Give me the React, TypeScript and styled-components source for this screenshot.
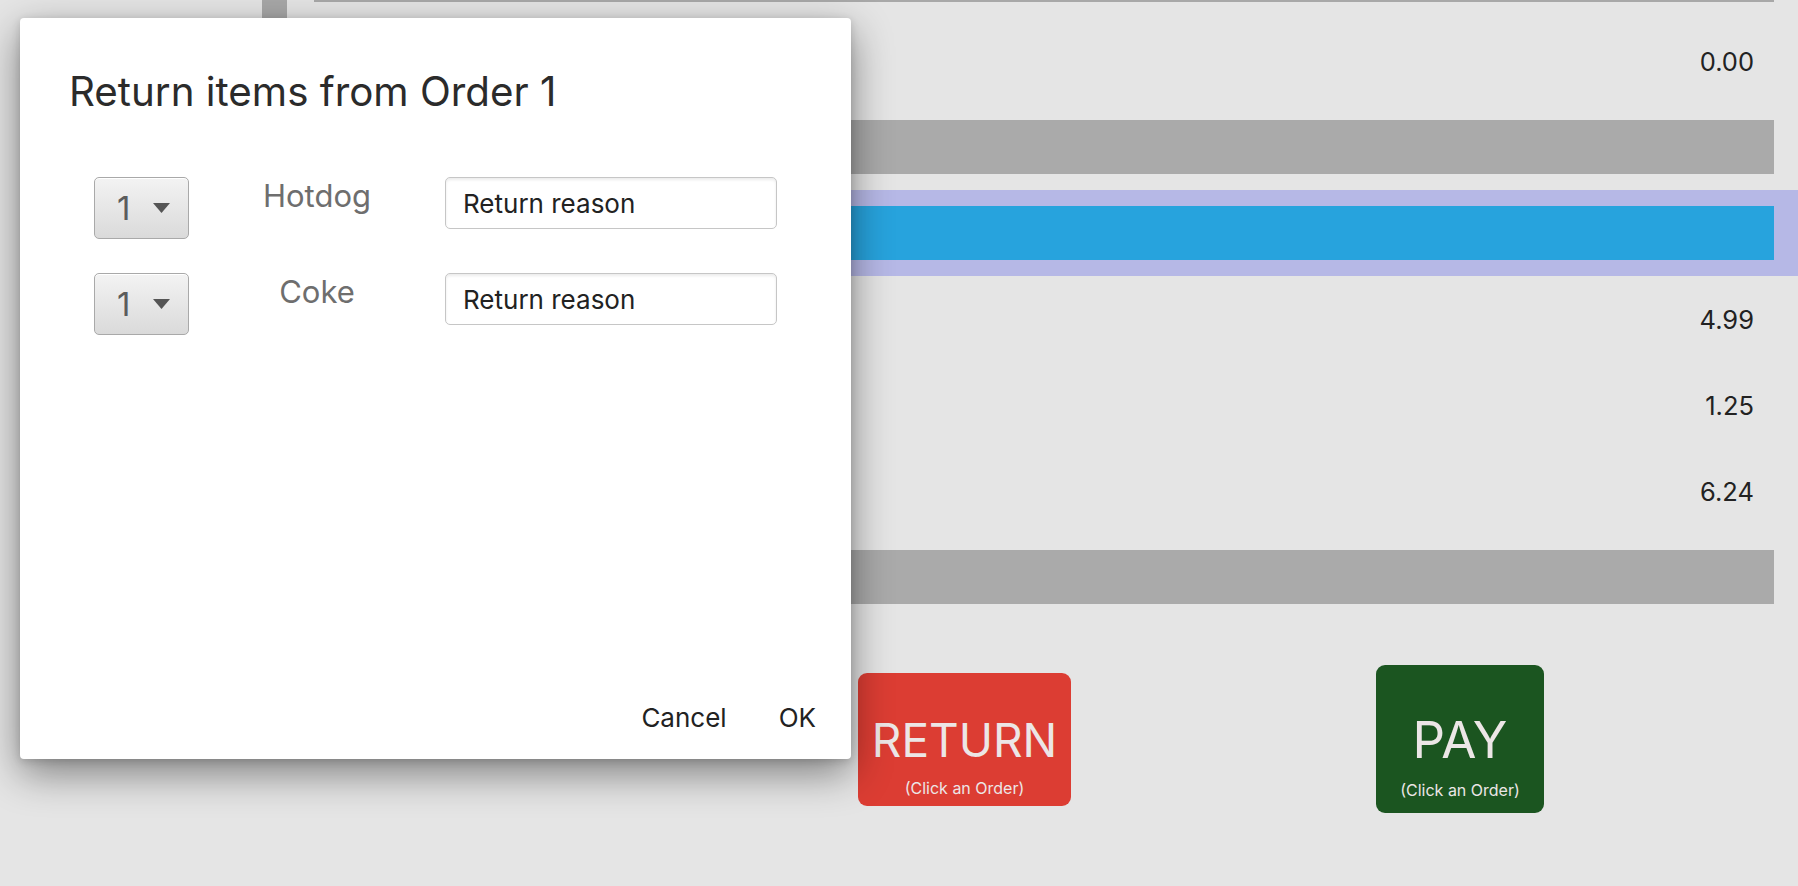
import React from "react";
import styled, { createGlobalStyle } from "styled-components";

const GlobalStyle = createGlobalStyle`
  html, body {
    margin: 0;
    padding: 0;
    background: #e5e5e5;
  }
  body {
    font-family: Inter, "Liberation Sans", sans-serif;
    overflow: hidden;
  }
`;

const Screen = styled.div`
  position: relative;
  display: flex;
  width: 1798px;
  height: 886px;
  background: #e5e5e5;
  overflow: hidden;
`;

const Sidebar = styled.div`
  width: 262px;
  flex-shrink: 0;
`;

const ScrollThumb = styled.div`
  width: 25px;
  height: 120px;
  flex-shrink: 0;
  background: #a8a8a8;
`;

const OrderPanel = styled.div`
  display: flex;
  flex-direction: column;
  width: 1460px;
  margin-left: 27px;
  border-top: 2px solid #a8a8a8;
`;

interface IValueRow {
  $height: number;
}

const ValueRow = styled.div<IValueRow>`
  display: flex;
  align-items: center;
  justify-content: flex-end;
  height: ${({ $height }) => $height}px;
  padding-right: 20px;
  font-size: 25.5px;
  color: #222;
`;

const GrayBar = styled.div`
  height: 54px;
  background: #aaaaaa;
`;

const Spacer = styled.div`
  height: 16px;
`;

const SelectedRow = styled.div`
  margin-right: -24px;
  padding: 16px 24px 16px 0;
  background: #b6b8e6;
`;

const SelectedBar = styled.div`
  height: 54px;
  background: #27a3dd;
`;

const ActionBar = styled.div`
  display: flex;
  align-items: center;
  height: 270px;
  padding-left: 544px;
  gap: 305px;
`;

interface IActionButton {
  $bg: string;
  $w: number;
  $h: number;
  $titleSize: number;
}

const ActionButton = styled.button<IActionButton>`
  display: flex;
  flex-direction: column;
  align-items: center;
  justify-content: center;
  width: ${({ $w }) => $w}px;
  height: ${({ $h }) => $h}px;
  padding: 34px 0 0;
  border: none;
  border-radius: 9px;
  background: ${({ $bg }) => $bg};
  color: #ece6e6;
  font-family: Inter, "Liberation Sans", sans-serif;

  strong {
    font-weight: 400;
    font-size: ${({ $titleSize }) => $titleSize}px;
    line-height: 1;
  }

  span {
    margin-top: 17px;
    font-size: 16px;
    line-height: 1;
  }
`;

/* modal */

const Dialog = styled.div`
  position: absolute;
  left: 20px;
  top: 18px;
  width: 831px;
  height: 741px;
  box-sizing: border-box;
  display: flex;
  flex-direction: column;
  background: #fff;
  border-radius: 4px;
  box-shadow: 0 14px 40px rgba(0, 0, 0, 0.45), 0 2px 8px rgba(0, 0, 0, 0.15);
`;

const Title = styled.h1`
  margin: 50px 0 0 49px;
  font-size: 40.3px;
  line-height: 48px;
  font-weight: 400;
  color: #2b2b2b;
`;

const ItemList = styled.div`
  display: flex;
  flex-direction: column;
  gap: 34px;
  margin: 61px 0 0 74px;
`;

const ItemRow = styled.div`
  display: grid;
  grid-template-columns: 95px 256px 332px;
  align-items: start;
`;

const QtySelect = styled.div`
  display: flex;
  align-items: center;
  height: 62px;
  box-sizing: border-box;
  padding-left: 22px;
  border: 1.5px solid #a9a9a9;
  border-radius: 5px;
  background: linear-gradient(#f3f3f3, #dadada);
  box-shadow: inset 0 1px 0 #fff;
  color: #5c5c5c;
  font-size: 33px;

  svg {
    margin-left: 23px;
  }
`;

const ItemName = styled.div`
  padding-top: 1px;
  text-align: center;
  font-size: 31px;
  line-height: 36px;
  color: #6e6e6e;
`;

const ReasonInput = styled.input`
  width: 332px;
  height: 52px;
  box-sizing: border-box;
  padding: 0 0 0 17px;
  border: 1px solid #c6c6c6;
  border-radius: 5px;
  box-shadow: inset 0 2px 3px rgba(0, 0, 0, 0.08);
  background: #fff;
  color: #222;
  font-family: Inter, "Liberation Sans", sans-serif;
  font-size: 26px;
  outline: none;
`;

const Footer = styled.div`
  display: flex;
  justify-content: flex-end;
  gap: 52px;
  margin-top: auto;
  padding: 0 35px 25px 0;
`;

const TextButton = styled.button`
  padding: 0;
  border: none;
  background: none;
  font-family: Inter, "Liberation Sans", sans-serif;
  font-size: 26px;
  line-height: 32px;
  color: #222;
`;

const items = ["Hotdog", "Coke"];

const Caret = () => (
  <svg width="17" height="10" viewBox="0 0 17 10">
    <path d="M0 0 H17 L8.5 10 Z" fill="#555" />
  </svg>
);

const App: React.FC = () => (
  <Screen>
    <GlobalStyle />
    <Sidebar />
    <ScrollThumb />
    <OrderPanel>
      <ValueRow $height={118}>0.00</ValueRow>
      <GrayBar />
      <Spacer />
      <SelectedRow>
        <SelectedBar />
      </SelectedRow>
      <ValueRow $height={86}>4.99</ValueRow>
      <ValueRow $height={86}>1.25</ValueRow>
      <ValueRow $height={86}>6.24</ValueRow>
      <Spacer />
      <GrayBar />
      <ActionBar>
        <ActionButton $bg="#dc3d33" $w={213} $h={133} $titleSize={46}>
          <strong>RETURN</strong>
          <span>(Click an Order)</span>
        </ActionButton>
        <ActionButton $bg="#1b5520" $w={168} $h={148} $titleSize={51}>
          <strong>PAY</strong>
          <span>(Click an Order)</span>
        </ActionButton>
      </ActionBar>
    </OrderPanel>

    <Dialog role="dialog">
      <Title>Return items from Order 1</Title>
      <ItemList>
        {items.map((name) => (
          <ItemRow key={name}>
            <QtySelect>
              1
              <Caret />
            </QtySelect>
            <ItemName>{name}</ItemName>
            <ReasonInput defaultValue="Return reason" />
          </ItemRow>
        ))}
      </ItemList>
      <Footer>
        <TextButton>Cancel</TextButton>
        <TextButton>OK</TextButton>
      </Footer>
    </Dialog>
  </Screen>
);

export default App;
